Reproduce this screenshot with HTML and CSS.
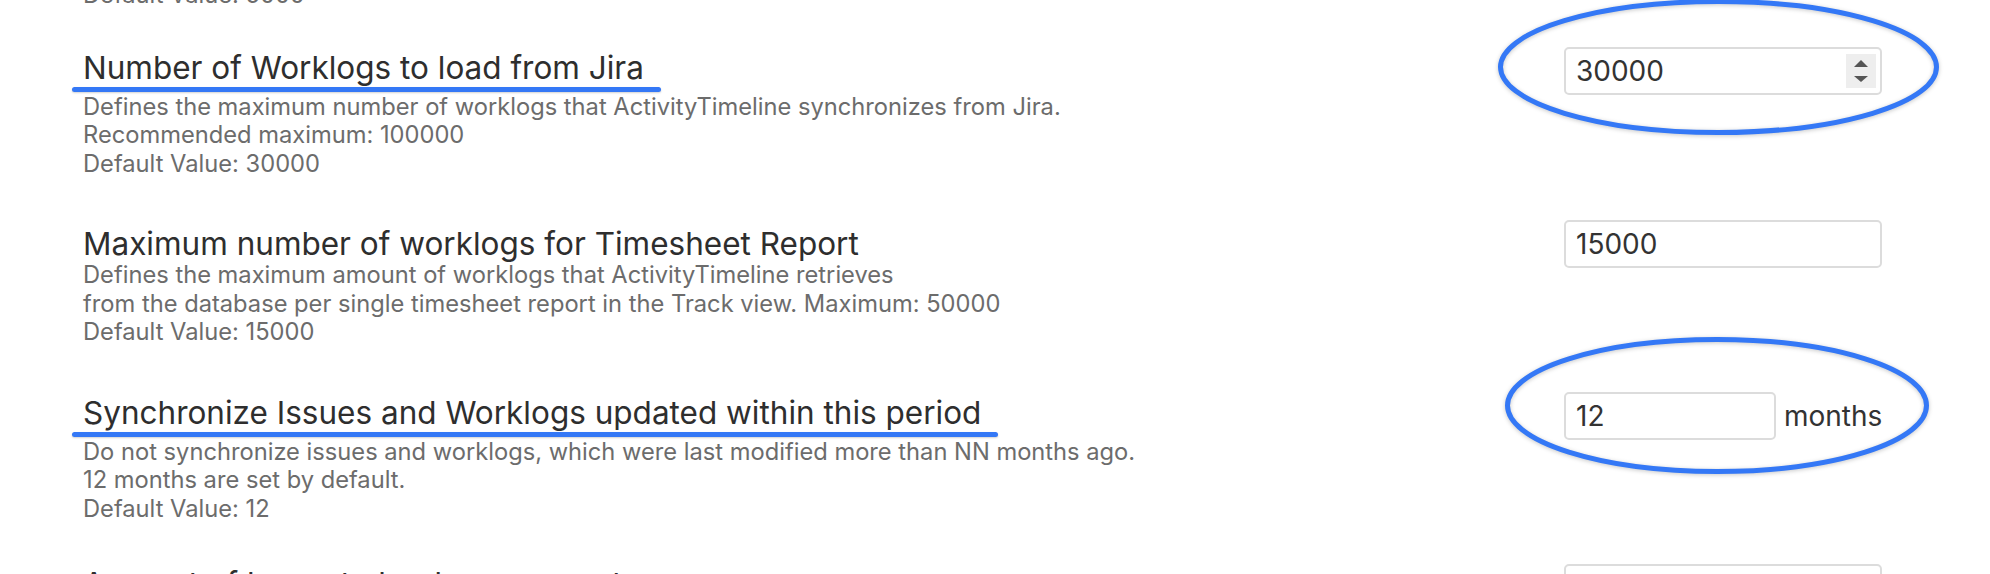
FILE: index.html
```html
<!DOCTYPE html>
<html lang="en">
<head>
<meta charset="utf-8">
<title>Settings</title>
<link rel="stylesheet" href="styles.css">
</head>
<body>
<main class="page">
  <section class="setting setting--partial">
    <div class="info">
      <h3 class="title">Number of Issues to load from Jira</h3>
      <p class="desc">Defines the maximum number of issues that ActivityTimeline synchronizes from Jira.<br>Recommended maximum: 50000<br>Default Value: 5000</p>
    </div>
    <div class="control"><input class="field" type="text" value="5000"></div>
  </section>

  <section class="setting setting--marked">
    <div class="info">
      <h3 class="title title--marked">Number of Worklogs to load from Jira</h3>
      <p class="desc">Defines the maximum number of worklogs that ActivityTimeline synchronizes from Jira.<br>Recommended maximum: 100000<br>Default Value: 30000</p>
    </div>
    <div class="control">
      <svg class="ring ring--one" width="441" height="136" viewBox="0 0 441 136"><ellipse cx="220.5" cy="68" rx="218" ry="65.5"/></svg>
      <input class="field" type="text" value="30000">
      <span class="spinner">
        <svg width="14" height="22" viewBox="0 0 14 22"><path d="M7 0 L14 7 L0 7 Z"/><path d="M0 16 L14 16 L7 22 Z"/></svg>
      </span>
    </div>
  </section>

  <section class="setting">
    <div class="info">
      <h3 class="title">Maximum number of worklogs for Timesheet Report</h3>
      <p class="desc">Defines the maximum amount of worklogs that ActivityTimeline retrieves<br>from the database per single timesheet report in the Track view. Maximum: 50000<br>Default Value: 15000</p>
    </div>
    <div class="control"><input class="field" type="text" value="15000"></div>
  </section>

  <section class="setting setting--marked setting--tight">
    <div class="info">
      <h3 class="title title--marked">Synchronize Issues and Worklogs updated within this period</h3>
      <p class="desc">Do not synchronize issues and worklogs, which were last modified more than NN months ago.<br>12 months are set by default.<br>Default Value: 12</p>
    </div>
    <div class="control">
      <svg class="ring ring--two" width="424" height="137" viewBox="0 0 424 137"><ellipse cx="212" cy="68.5" rx="209.5" ry="66"/></svg>
      <input class="field field--short" type="text" value="12">
      <span class="unit">months</span>
    </div>
  </section>

  <section class="setting setting--last">
    <div class="info">
      <h3 class="title">Amount of hours to load per request</h3>
      <p class="desc">Defines the amount of hours loaded per single request.<br>Default Value: 100</p>
    </div>
    <div class="control"><input class="field" type="text" value="100"></div>
  </section>
</main>
</body>
</html>
```

FILE: styles.css
```css
html, body {
  margin: 0;
  background: #ffffff;
  overflow: hidden;
}

body {
  font-family: Inter, "Noto Sans", "Liberation Sans", sans-serif;
  color: #333333;
}

.page {
  margin-top: -111px;
  padding: 0 108px 0 83px;
}

.setting {
  display: flex;
  justify-content: space-between;
  align-items: flex-start;
  margin-bottom: 48px;
}

.setting--partial {
  margin-bottom: 40px;
}

.setting--tight {
  margin-bottom: 43px;
}

.info {
  flex: 1;
  min-width: 0;
}

.title {
  display: block;
  width: fit-content;
  position: relative;
  margin: 0;
  font-size: 31.5px;
  line-height: 35px;
  font-weight: 400;
  color: #2e2e2e;
}

.setting--marked .title {
  margin-bottom: 8px;
}

.title--marked::after {
  content: "";
  position: absolute;
  left: -11px;
  right: -17px;
  top: 37px;
  height: 5px;
  border-radius: 3px;
  background: #3478f6;
  box-shadow: 0 1px 2px rgba(0, 0, 0, 0.18);
}

.desc {
  margin: 0;
  font-size: 23.7px;
  line-height: 28.5px;
  color: #6c6c6c;
}

.control {
  position: relative;
  display: flex;
  align-items: center;
  gap: 8px;
  width: 318px;
  margin-top: -6px;
}

.setting--marked .control {
  margin-top: -3px;
}

.setting--last .control {
  margin-top: -2px;
}

.field {
  box-sizing: border-box;
  width: 318px;
  height: 48px;
  margin: 0;
  padding: 0 10px;
  border: 2px solid #dcdcdc;
  border-radius: 5px;
  background: #ffffff;
  font-family: Inter, "Noto Sans", "Liberation Sans", sans-serif;
  font-size: 28px;
  color: #333333;
  outline: none;
}

.field--short {
  width: 212px;
}

.unit {
  font-size: 28px;
  color: #333333;
  line-height: 1;
}

.spinner {
  position: absolute;
  right: 6px;
  top: 7px;
  width: 30px;
  height: 34px;
  background: #eeeeee;
  display: flex;
  align-items: center;
  justify-content: center;
}

.spinner svg {
  display: block;
  fill: #555555;
}

.ring {
  position: absolute;
  overflow: visible;
  pointer-events: none;
  filter: drop-shadow(0 1px 2px rgba(0, 0, 0, 0.22));
}

.ring ellipse {
  fill: none;
  stroke: #3478f6;
  stroke-width: 5;
}

.ring--one {
  left: -66px;
  top: -48px;
}

.ring--two {
  left: -59px;
  top: -55px;
}
```
